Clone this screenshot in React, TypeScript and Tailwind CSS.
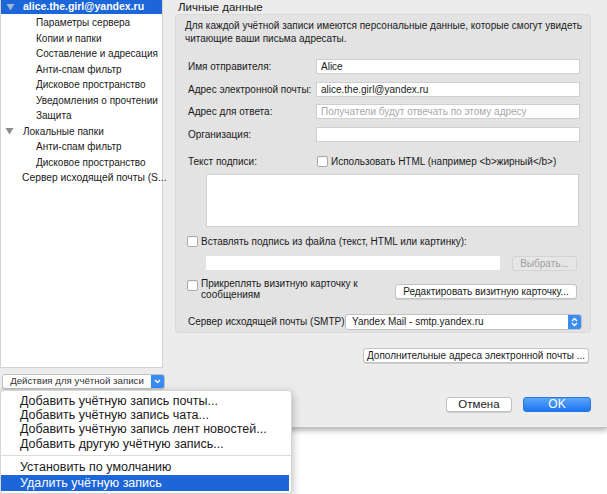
import React from "react";

const Tri = ({ color }: { color: string }) => (
  <svg width="9" height="8" viewBox="0 0 9 8" className="shrink-0">
    <path d="M0.5 1 L8.5 1 L4.5 7.5 Z" fill={color} />
  </svg>
);

const Checkbox = () => (
  <span className="inline-block w-[11px] h-[11px] shrink-0 bg-white border border-[#a9a9a9] rounded-[2px] shadow-[inset_0_1px_0_#f4f4f4]" />
);

const Field = ({ value, placeholder }: { value?: string; placeholder?: string }) => (
  <div className="w-[264px] h-[15px] shrink-0 bg-white border border-[#cfcfcf] flex items-center px-[4px]">
    {value ? (
      <span className="text-[#1a1a1a]">{value}</span>
    ) : (
      <span className="text-[#a8a8a8]">{placeholder}</span>
    )}
  </div>
);

const MacButton = ({
  children,
  className = "",
  disabled,
}: {
  children: React.ReactNode;
  className?: string;
  disabled?: boolean;
}) => (
  <div
    className={`h-[15px] shrink-0 flex items-center justify-center rounded-[3px] border ${
      disabled
        ? "bg-[#e6e6e6] border-[#d4d4d4] text-[#a0a0a0]"
        : "bg-white border-[#c2c2c2] text-[#1a1a1a] shadow-[0_1px_0_#d0d0d0]"
    } ${className}`}
  >
    {children}
  </div>
);

const tree = [
  "Параметры сервера",
  "Копии и папки",
  "Составление и адресация",
  "Анти-спам фильтр",
  "Дисковое пространство",
  "Уведомления о прочтении",
  "Защита",
];

const fields = [
  { label: "Имя отправителя:", value: "Alice" },
  { label: "Адрес электронной почты:", value: "alice.the.girl@yandex.ru" },
  { label: "Адрес для ответа:", placeholder: "Получатели будут отвечать по этому адресу" },
  { label: "Организация:" },
];

export default function App() {
  return (
    <div className="relative w-[607px] h-[494px] bg-white overflow-hidden whitespace-nowrap [font-family:'Liberation_Sans',Arial,sans-serif] text-[#1a1a1a]">
      {/* window */}
      <div className="h-[428px] bg-[#ececec] flex shadow-[0_2px_6px_rgba(0,0,0,0.35)] border-b border-[#c4c4c4]">
        {/* sidebar */}
        <div className="w-[163px] shrink-0 flex flex-col">
          <div className="h-[368px] bg-white border-r border-l border-b border-[#d3d3d3] text-[10px]">
            <div className="h-[14px] bg-[#1c66d9] flex items-center pl-[5px] gap-[8px] text-white font-bold text-[10.5px]">
              <Tri color="#9fb3d6" />
              <span>alice.the.girl@yandex.ru</span>
            </div>
            <div className="h-[1px]" />
            {tree.map((t) => (
              <div key={t} className="h-[15.5px] flex items-center pl-[35px]">
                {t}
              </div>
            ))}
            <div className="h-[15.5px] flex items-center pl-[4px] gap-[9px]">
              <Tri color="#8c8c8c" />
              <span>Локальные папки</span>
            </div>
            <div className="h-[15.5px] flex items-center pl-[35px]">Анти-спам фильтр</div>
            <div className="h-[15.5px] flex items-center pl-[35px]">Дисковое пространство</div>
            <div className="h-[15.5px] flex items-center pl-[21px] text-[10.3px]">Сервер исходящей почты (S...</div>
          </div>
          <div className="pt-[6px] pl-[2px]">
            <div className="w-[163px] h-[15px] flex rounded-[3px] border border-[#c2c2c2] bg-white overflow-hidden shadow-[0_1px_0_#d0d0d0]">
              <div className="flex-1 flex items-center justify-center text-[9.7px] text-[#333]">
                Действия для учётной записи
              </div>
              <div className="w-[13px] bg-[#3a8cf3] flex items-center justify-center">
                <svg width="7" height="5" viewBox="0 0 7 5">
                  <path d="M1 1 L3.5 3.5 L6 1" stroke="white" strokeWidth="1.3" fill="none" />
                </svg>
              </div>
            </div>
          </div>
        </div>

        {/* main pane */}
        <div className="flex-1 min-w-0 flex flex-col pl-[12px] pr-[16px] text-[10px] leading-[13px]">
          <div className="h-[14px] flex items-center pl-[3px] text-[11.5px]">Личные данные</div>
          <div className="h-[319px] shrink-0 bg-[#e3e3e3] border border-[#d9d9d9] rounded-[4px] pl-[9px] pt-[4px]">
            <p>
              Для каждой учётной записи имеются персональные данные, которые смогут увидеть
              <br />
              читающие ваши письма адресаты.
            </p>

            <div className="mt-[14px] flex flex-col gap-[7.5px] pl-[3px]">
              {fields.map((r) => (
                <div key={r.label} className="h-[15px] flex items-center">
                  <div className="w-[128px] shrink-0">{r.label}</div>
                  <Field value={r.value} placeholder={r.placeholder} />
                </div>
              ))}
            </div>

            <div className="mt-[13px] h-[13px] flex items-center pl-[3px]">
              <div className="w-[129px] shrink-0">Текст подписи:</div>
              <Checkbox />
              <span className="ml-[3px]">Использовать HTML (например &lt;b&gt;жирный&lt;/b&gt;)</span>
            </div>

            <div className="ml-[21px] mt-[6px] w-[373px] h-[53px] bg-white border border-[#cfcfcf]" />

            <div className="mt-[8px] h-[13px] flex items-center pl-[2px]">
              <Checkbox />
              <span className="ml-[3px]">Вставлять подпись из файла (текст, HTML или картинку):</span>
            </div>

            <div className="mt-[8px] flex items-center pl-[21px]">
              <div className="w-[294px] h-[14px] shrink-0 bg-white" />
              <MacButton disabled className="ml-[12px] w-[65px]">
                Выбрать...
              </MacButton>
            </div>

            <div className="mt-[7px] flex items-start pl-[2px]">
              <div className="mt-[2px]">
                <Checkbox />
              </div>
              <div className="ml-[3px] w-[194px] shrink-0 leading-[11px]">
                Прикреплять визитную карточку к
                <br />
                сообщениям
              </div>
              <MacButton className="mt-[6px] w-[182px]">Редактировать визитную карточку...</MacButton>
            </div>

            <div className="mt-[14px] flex items-center pl-[3px]">
              <div className="w-[157px] shrink-0">Сервер исходящей почты (SMTP)</div>
              <div className="w-[237px] h-[16px] shrink-0 flex rounded-[3px] border border-[#c2c2c2] bg-white overflow-hidden">
                <div className="flex-1 flex items-center pl-[6px]">Yandex Mail - smtp.yandex.ru</div>
                <div className="w-[13px] bg-[#3a8cf3] flex items-center justify-center">
                  <svg width="7" height="10" viewBox="0 0 7 10">
                    <path d="M1 4 L3.5 1.5 L6 4 M1 6 L3.5 8.5 L6 6" stroke="white" strokeWidth="1.3" fill="none" />
                  </svg>
                </div>
              </div>
            </div>
          </div>

          <div className="mt-[15px] flex justify-end pr-[2px]">
            <MacButton className="w-[226px]">Дополнительные адреса электронной почты ...</MacButton>
          </div>

          <div className="mt-[34px] flex justify-end gap-[11px]">
            <MacButton className="w-[66px] text-[11.5px]">Отмена</MacButton>
            <div className="w-[68px] h-[15px] rounded-[3px] bg-gradient-to-b from-[#5aa6fb] to-[#1b74f0] border border-[#2a78e4] flex items-center justify-center text-white text-[12px]">
              OK
            </div>
          </div>
        </div>
      </div>

      {/* popup menu */}
      <div className="absolute left-0 top-[390px] w-[292px] h-[104px] bg-white rounded-[4px] shadow-[0_3px_10px_rgba(0,0,0,0.3)] border border-[#d6d6d6] pt-[3px] text-[12.5px]">
        {[
          "Добавить учётную запись почты...",
          "Добавить учётную запись чата...",
          "Добавить учётную запись лент новостей...",
          "Добавить другую учётную запись...",
        ].map((m) => (
          <div key={m} className="h-[14.3px] flex items-center pl-[19px]">
            {m}
          </div>
        ))}
        <div className="h-[9px] flex items-center">
          <div className="w-full h-px bg-[#dcdcdc]" />
        </div>
        <div className="h-[15px] flex items-center pl-[19px]">Установить по умолчанию</div>
        <div className="h-[16px] flex items-center pl-[19px] bg-[#1c66d9] text-white mr-[2px]">
          Удалить учётную запись
        </div>
      </div>
    </div>
  );
}
